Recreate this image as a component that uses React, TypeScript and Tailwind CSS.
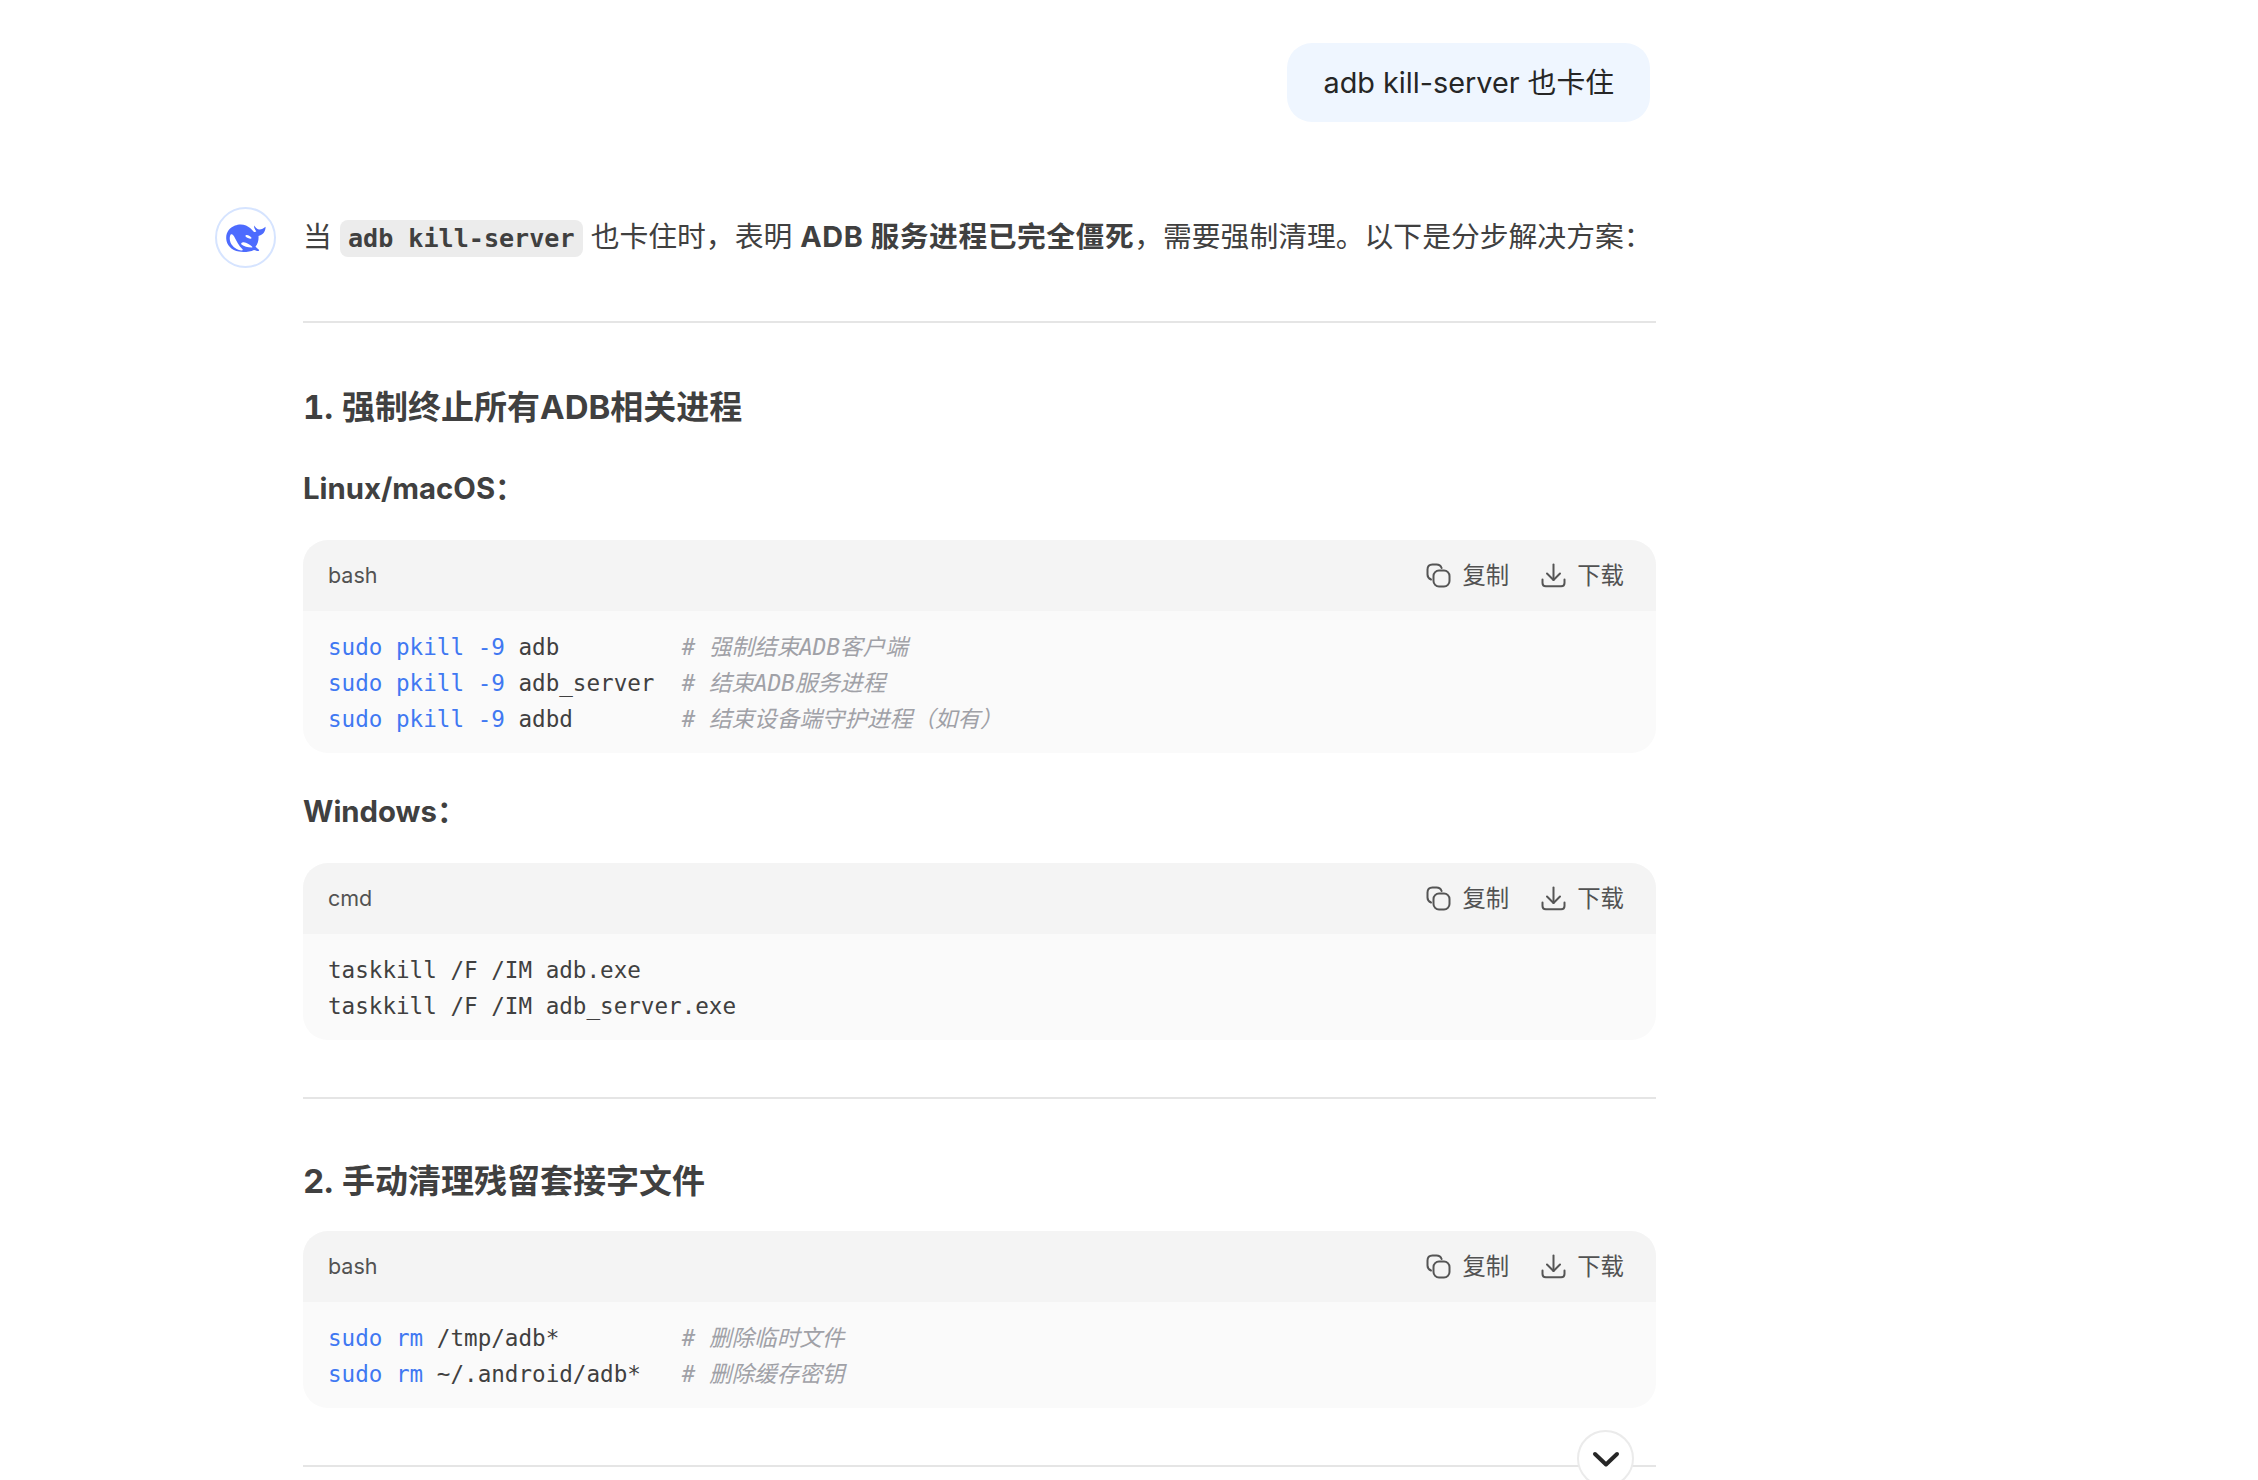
import type { ReactNode } from 'react';

const sans = 'font-["Inter","Noto_Sans_CJK_SC",sans-serif]';
const mono = 'font-["DejaVu_Sans_Mono","Noto_Sans_CJK_SC",monospace]';

function CopyIcon() {
  return (
    <svg width="25" height="25" viewBox="0 0 25 25" fill="none" stroke="#555" strokeWidth="2">
      <rect x="7.5" y="7.5" width="16" height="16" rx="5.5" />
      <path d="M5 16.5C2.8 15.6 1.5 14 1.5 11.5V6.5C1.5 3.5 3.5 1.5 6.5 1.5H10.5C13 1.5 14.8 2.8 15.6 5" strokeLinecap="round" />
    </svg>
  );
}

function DownloadIcon() {
  return (
    <svg width="25" height="25" viewBox="0 0 25 25" fill="none" stroke="#555" strokeWidth="2" strokeLinecap="round" strokeLinejoin="round">
      <path d="M12.5 1.5V17" />
      <path d="M6 10.5L12.5 17L19 10.5" />
      <path d="M1.5 16.5V20C1.5 22 2.8 23.2 4.8 23.2H20.2C22.2 23.2 23.5 22 23.5 20V16.5" />
    </svg>
  );
}

function WhaleLogo() {
  return (
    <svg width="40" height="28" viewBox="0 0 40 28">
      <path
        fill="#4d6bfe"
        d="M9 1.6C12 .3 16.500 0 20 1.500C23 2.800 25.500 5 27.500 7.400C28.600 8.300 29.800 8 30.300 7.200C29 5.500 27.800 3.500 28 1.500C29.500 3.200 30.800 5.200 33 5.500C35.200 5.700 37.800 4.400 39.500 2.800C39.800 6.500 37.500 10.300 33.800 11.500L32.500 12C32.900 16 31.800 20 29.500 22.800C30.500 24 32.500 24.800 33.200 26.200C33.300 26.900 32.800 27.200 32 27.100C30.600 26.900 29.200 26.100 28 25.900C24 27.800 18 28.300 13 27.600C5.500 26.500 .5 21 .2 14.500C0 8.500 3.500 3.700 9 1.600Z"
      />
      <path
        fill="#fff"
        d="M4.700 10.500C5.800 9.700 7 10.500 8 12.200C10.500 16.500 12.800 22 16.500 25.300C17.200 26 16.800 26.500 15.800 26.500C11 26.300 6.500 23 4.500 18.500C3.400 15.800 3.500 12 4.700 10.500Z"
      />
      <path fill="#fff" d="M19.800 11.300C21.300 10.500 23.500 11.500 25.300 13.500C25.800 14.200 25.400 14.800 24.500 14.700C22.800 14.500 21 13.700 19.800 12.700C19.300 12.200 19.300 11.600 19.800 11.300Z" />
      <path fill="#fff" d="M15.500 20.500C18 22.400 21.500 23.500 25.500 23.600C26.500 23.600 26.700 23 26 22.500C23.500 20.700 20.500 18.800 17.800 18.300C15.800 18 14.500 19.500 15.500 20.500Z" />
    </svg>
  );
}

function Kw({ children }: { children: ReactNode }) {
  return <span className="text-[#4078f2]">{children}</span>;
}

function Note({ children }: { children: ReactNode }) {
  return <span className="italic text-[#a0a1a7]">{children}</span>;
}

function CodeBlock({ lang, lines, className }: { lang: string; lines: ReactNode[]; className?: string }) {
  return (
    <div className={`overflow-hidden rounded-[25px] bg-[#fafafa] ${className ?? ''}`}>
      <div className="flex h-[71px] items-center justify-between bg-[#f4f4f4] pl-[25px] pr-[32px] text-[#525252]">
        <span className="text-[21.5px]">{lang}</span>
        <div className="mt-[1px] flex items-center text-[23.4px]">
          <CopyIcon />
          <span className="ml-[11px]">复制</span>
          <span className="ml-[32px]">
            <DownloadIcon />
          </span>
          <span className="ml-[11px]">下载</span>
        </div>
      </div>
      <pre className={`${mono} px-[25px] pb-[16px] pt-[18px] text-[22.6px] leading-[36px] text-[#404040]`}>
        {lines.map((line, i) => (
          <div key={i}>{line}</div>
        ))}
      </pre>
    </div>
  );
}

export default function App() {
  return (
    <div className={`${sans} relative h-[1480px] overflow-hidden bg-white text-[#404040]`}>
      <div className="ml-[303px] flex w-[1353px] flex-col pt-[43px]">
        <div className="mr-[6px] self-end rounded-[25px] bg-[#eff6ff] px-[36px] text-[28.8px] leading-[79px] text-[#262626]">
          adb kill-server 也卡住
        </div>

        <div className="mt-[84px] flex items-center text-[28.8px] leading-[60px]">
          <div className="-ml-[88px] mr-[27px] flex h-[61px] w-[61px] shrink-0 items-center justify-center rounded-full border-2 border-[#d6e4ff] bg-white">
            <WhaleLogo />
          </div>
          <p className="mt-[1px] whitespace-nowrap">
            当{' '}
            <code className={`${mono} rounded-[8px] bg-[#ececec] px-[8px] py-[4px] text-[25.1px] font-bold`}>adb kill-server</code>{' '}
            也卡住时，表明 <strong className="font-bold tracking-[0.5px]">ADB 服务进程已完全僵死</strong>，需要强制清理。以下是分步解决方案：
          </p>
        </div>

        <hr className="mt-[52px] border-t-2 border-[#e5e5e5]" />

        <h3 className="mt-[62px] text-[33px] font-bold tabular-nums leading-[44px]">1. 强制终止所有ADB相关进程</h3>
        <h4 className="mt-[40px] text-[29.3px] font-bold leading-[40px]">Linux/macOS：</h4>

        <CodeBlock
          className="mt-[31px]"
          lang="bash"
          lines={[
            <><Kw>sudo pkill -9</Kw> adb         <Note># 强制结束ADB客户端</Note></>,
            <><Kw>sudo pkill -9</Kw> adb_server  <Note># 结束ADB服务进程</Note></>,
            <><Kw>sudo pkill -9</Kw> adbd        <Note># 结束设备端守护进程（如有）</Note></>,
          ]}
        />

        <h4 className="mt-[39px] text-[29.3px] font-bold leading-[40px]">Windows：</h4>

        <CodeBlock
          className="mt-[31px]"
          lang="cmd"
          lines={['taskkill /F /IM adb.exe', 'taskkill /F /IM adb_server.exe']}
        />

        <hr className="mt-[57px] border-t-2 border-[#e5e5e5]" />

        <h3 className="mt-[60px] text-[33px] font-bold tabular-nums leading-[44px]">2. 手动清理残留套接字文件</h3>

        <CodeBlock
          className="mt-[28px]"
          lang="bash"
          lines={[
            <><Kw>sudo rm</Kw> /tmp/adb*         <Note># 删除临时文件</Note></>,
            <><Kw>sudo rm</Kw> ~/.android/adb*   <Note># 删除缓存密钥</Note></>,
          ]}
        />

        <hr className="mt-[57px] border-t-2 border-[#e5e5e5]" />
      </div>

      <button className="absolute left-[1577px] top-[1430px] flex h-[57px] w-[57px] items-center justify-center rounded-full border-2 border-[#ebebeb] bg-white">
        <svg width="28" height="18" viewBox="0 0 28 18" fill="none" stroke="#262626" strokeWidth="4" strokeLinecap="round" strokeLinejoin="round">
          <path d="M3 4L14 14.5L25 4" />
        </svg>
      </button>
    </div>
  );
}
